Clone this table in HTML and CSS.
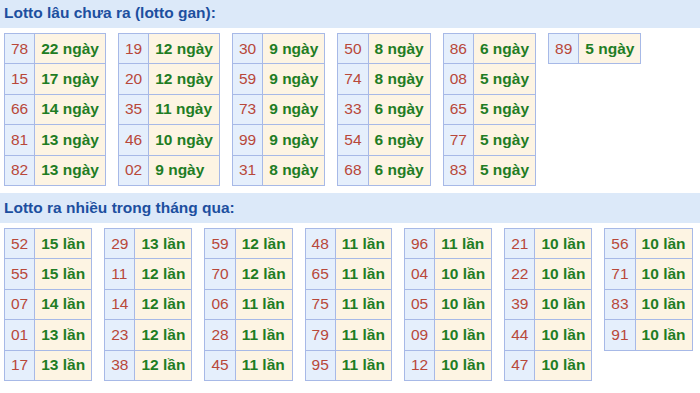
FILE: index.html
```html
<!DOCTYPE html>
<html lang="vi">
<head>
<meta charset="utf-8">
<title>Lotto</title>
<link rel="stylesheet" href="styles.css">
</head>
<body>
<div class="page">
  <section class="block">
    <h2 class="title">Lotto lâu chưa ra (lotto gan):</h2>
    <div class="tables">
      <table class="lt"><tr><td class="n">78</td><td class="v">22 ngày</td></tr><tr><td class="n">15</td><td class="v">17 ngày</td></tr><tr><td class="n">66</td><td class="v">14 ngày</td></tr><tr><td class="n">81</td><td class="v">13 ngày</td></tr><tr><td class="n">82</td><td class="v">13 ngày</td></tr></table>
      <table class="lt"><tr><td class="n">19</td><td class="v">12 ngày</td></tr><tr><td class="n">20</td><td class="v">12 ngày</td></tr><tr><td class="n">35</td><td class="v">11 ngày</td></tr><tr><td class="n">46</td><td class="v">10 ngày</td></tr><tr><td class="n">02</td><td class="v">9 ngày</td></tr></table>
      <table class="lt"><tr><td class="n">30</td><td class="v">9 ngày</td></tr><tr><td class="n">59</td><td class="v">9 ngày</td></tr><tr><td class="n">73</td><td class="v">9 ngày</td></tr><tr><td class="n">99</td><td class="v">9 ngày</td></tr><tr><td class="n">31</td><td class="v">8 ngày</td></tr></table>
      <table class="lt"><tr><td class="n">50</td><td class="v">8 ngày</td></tr><tr><td class="n">74</td><td class="v">8 ngày</td></tr><tr><td class="n">33</td><td class="v">6 ngày</td></tr><tr><td class="n">54</td><td class="v">6 ngày</td></tr><tr><td class="n">68</td><td class="v">6 ngày</td></tr></table>
      <table class="lt"><tr><td class="n">86</td><td class="v">6 ngày</td></tr><tr><td class="n">08</td><td class="v">5 ngày</td></tr><tr><td class="n">65</td><td class="v">5 ngày</td></tr><tr><td class="n">77</td><td class="v">5 ngày</td></tr><tr><td class="n">83</td><td class="v">5 ngày</td></tr></table>
      <table class="lt"><tr><td class="n">89</td><td class="v">5 ngày</td></tr></table>
    </div>
  </section>
  <section class="block">
    <h2 class="title">Lotto ra nhiều trong tháng qua:</h2>
    <div class="tables">
      <table class="lt"><tr><td class="n">52</td><td class="v">15 lần</td></tr><tr><td class="n">55</td><td class="v">15 lần</td></tr><tr><td class="n">07</td><td class="v">14 lần</td></tr><tr><td class="n">01</td><td class="v">13 lần</td></tr><tr><td class="n">17</td><td class="v">13 lần</td></tr></table>
      <table class="lt"><tr><td class="n">29</td><td class="v">13 lần</td></tr><tr><td class="n">11</td><td class="v">12 lần</td></tr><tr><td class="n">14</td><td class="v">12 lần</td></tr><tr><td class="n">23</td><td class="v">12 lần</td></tr><tr><td class="n">38</td><td class="v">12 lần</td></tr></table>
      <table class="lt"><tr><td class="n">59</td><td class="v">12 lần</td></tr><tr><td class="n">70</td><td class="v">12 lần</td></tr><tr><td class="n">06</td><td class="v">11 lần</td></tr><tr><td class="n">28</td><td class="v">11 lần</td></tr><tr><td class="n">45</td><td class="v">11 lần</td></tr></table>
      <table class="lt"><tr><td class="n">48</td><td class="v">11 lần</td></tr><tr><td class="n">65</td><td class="v">11 lần</td></tr><tr><td class="n">75</td><td class="v">11 lần</td></tr><tr><td class="n">79</td><td class="v">11 lần</td></tr><tr><td class="n">95</td><td class="v">11 lần</td></tr></table>
      <table class="lt"><tr><td class="n">96</td><td class="v">11 lần</td></tr><tr><td class="n">04</td><td class="v">10 lần</td></tr><tr><td class="n">05</td><td class="v">10 lần</td></tr><tr><td class="n">09</td><td class="v">10 lần</td></tr><tr><td class="n">12</td><td class="v">10 lần</td></tr></table>
      <table class="lt"><tr><td class="n">21</td><td class="v">10 lần</td></tr><tr><td class="n">22</td><td class="v">10 lần</td></tr><tr><td class="n">39</td><td class="v">10 lần</td></tr><tr><td class="n">44</td><td class="v">10 lần</td></tr><tr><td class="n">47</td><td class="v">10 lần</td></tr></table>
      <table class="lt"><tr><td class="n">56</td><td class="v">10 lần</td></tr><tr><td class="n">71</td><td class="v">10 lần</td></tr><tr><td class="n">83</td><td class="v">10 lần</td></tr><tr><td class="n">91</td><td class="v">10 lần</td></tr></table>
    </div>
  </section>
</div>
</body>
</html>
```
FILE: styles.css
```css
html, body {
  margin: 0;
  padding: 0;
  background: #ffffff;
}
body {
  font-family: "Liberation Sans", Arial, sans-serif;
  font-size: 15.5px;
  overflow: hidden;
}
.page {
  margin-top: -2px;
}
.block {
  margin: 0;
}
.title {
  margin: 0;
  height: 30px;
  line-height: 30px;
  padding: 0 4px;
  background: #dce9f9;
  color: #1d4f9f;
  font-size: 15.5px;
  font-weight: bold;
}
.tables {
  display: flex;
  flex-wrap: nowrap;
  align-items: flex-start;
  gap: 12px;
  padding: 5px 4px 7px;
}
.lt {
  border-collapse: collapse;
  flex: none;
}
.lt td {
  border: 1px solid #a7b9e7;
  height: 29.4px;
  padding: 0 6px;
  white-space: nowrap;
  line-height: 18px;
}
.lt .n {
  background: #e5effc;
  color: #b8483a;
}
.lt .v {
  background: #fdf4e3;
  color: #1f7d24;
  font-weight: bold;
}
```
